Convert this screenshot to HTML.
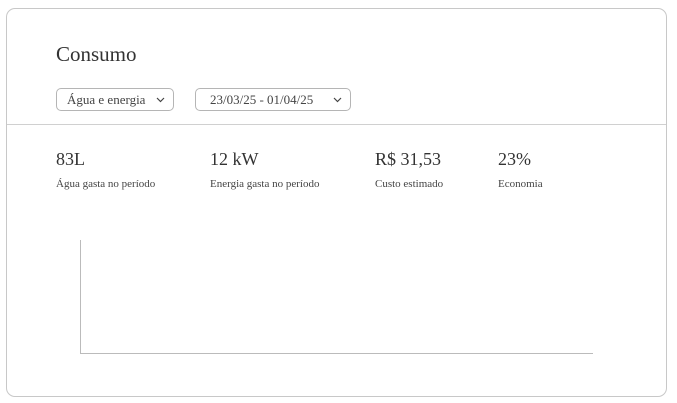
<!DOCTYPE html>
<html><head><style>
body{margin:0;width:677px;height:403px;background:#fff;font-family:"Liberation Serif","DejaVu Serif","Noto Serif CJK SC",serif;color:#333;position:relative;overflow:hidden}
.card{position:absolute;left:6px;top:8px;width:661px;height:389px;border:1px solid #c8c8c8;border-radius:9px;box-sizing:border-box}
.a{position:absolute;white-space:nowrap}
.sel{position:absolute;top:88px;height:23px;border:1px solid #b5b5b5;border-radius:5px;box-sizing:border-box;font-size:13px;line-height:21px;padding-left:10px;color:#444}
.sel svg{position:absolute;right:8px;top:8px}
.v{font-size:18px;top:149px;color:#333}
.l{font-size:11px;top:178px;color:#444}
</style></head><body>
<div class="card"></div>
<div class="a" style="left:56px;top:42px;font-size:21px;color:#333">Consumo</div>
<div class="sel" style="left:56px;width:118px">Água e energia<svg width="9" height="6" viewBox="0 0 9 6"><path d="M1 1L4.5 4.5L8 1" fill="none" stroke="#444" stroke-width="1.2"/></svg></div>
<div class="sel" style="left:195px;width:156px;padding-left:14px">23/03/25 - 01/04/25<svg width="9" height="6" viewBox="0 0 9 6"><path d="M1 1L4.5 4.5L8 1" fill="none" stroke="#444" stroke-width="1.2"/></svg></div>
<div class="a" style="left:7px;top:124px;width:659px;height:1px;background:#d0d0d0"></div>
<div class="a v" style="left:56px">83L</div><div class="a l" style="left:56px">Água gasta no período</div>
<div class="a v" style="left:210px">12 kW</div><div class="a l" style="left:210px">Energia gasta no período</div>
<div class="a v" style="left:375px">R$ 31,53</div><div class="a l" style="left:375px">Custo estimado</div>
<div class="a v" style="left:498px">23%</div><div class="a l" style="left:498px">Economia</div>
<div class="a" style="left:80px;top:240px;width:1px;height:114px;background:#bbb"></div>
<div class="a" style="left:80px;top:353px;width:513px;height:1px;background:#bbb"></div>
</body></html>
